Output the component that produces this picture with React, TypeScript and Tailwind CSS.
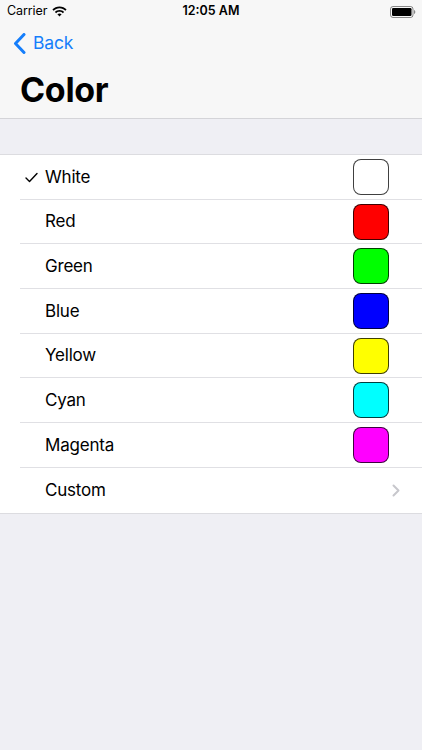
import React from "react";

const colors = [
  { name: "White", color: "#ffffff", checked: true },
  { name: "Red", color: "#ff0000" },
  { name: "Green", color: "#00ff00" },
  { name: "Blue", color: "#0000ff" },
  { name: "Yellow", color: "#ffff00" },
  { name: "Cyan", color: "#00ffff" },
  { name: "Magenta", color: "#ff00ff" },
];

function Wifi() {
  return (
    <svg width="15" height="11" viewBox="0 0 15 11" className="ml-[5px]">
      <path d="M7.5 0.5C4.7 0.5 2.2 1.6 0.4 3.4L1.7 4.7C3.2 3.2 5.2 2.3 7.5 2.3C9.8 2.3 11.8 3.2 13.3 4.7L14.6 3.4C12.8 1.6 10.3 0.5 7.5 0.5Z" fill="#000" />
      <path d="M7.5 4C5.7 4 4.1 4.7 2.9 5.9L4.2 7.2C5.1 6.3 6.2 5.8 7.5 5.8C8.8 5.8 9.9 6.3 10.8 7.2L12.1 5.9C10.9 4.7 9.3 4 7.5 4Z" fill="#000" />
      <path d="M7.5 7.4C6.7 7.4 6 7.7 5.4 8.3L7.5 10.4L9.6 8.3C9 7.7 8.3 7.4 7.5 7.4Z" fill="#000" />
    </svg>
  );
}

function Battery() {
  return (
    <svg width="26" height="12" viewBox="0 0 26 12">
      <rect x="0.5" y="0.5" width="22.5" height="11" rx="2.5" fill="none" stroke="#000" strokeOpacity="0.45" />
      <rect x="2" y="2" width="19.5" height="8" rx="1.2" fill="#000" />
      <path d="M24 4v4c0.8-0.2 1.3-1 1.3-2s-0.5-1.8-1.3-2z" fill="#000" fillOpacity="0.45" />
    </svg>
  );
}

export default function App() {
  return (
    <div
      className="w-full min-h-[750px] bg-[#efeff4] text-black"
      style={{ fontFamily: "Inter, 'Liberation Sans', sans-serif" }}
    >
      <div className="bg-[#f7f7f7] h-[119px] border-b border-[#d4d4d8] flex flex-col">
        <div className="h-[22px] relative flex items-center px-[7px] pt-[1px]">
          <div className="flex items-center text-[12.5px] tracking-[-0.1px]">
            <span>Carrier</span>
            <Wifi />
          </div>
          <div className="absolute left-0 right-0 top-0 h-[22px] flex items-center justify-center text-[12.5px] font-semibold pt-[1px]">
            12:05 AM
          </div>
          <div className="ml-auto mr-[-1px] flex items-center">
            <Battery />
          </div>
        </div>
        <div className="h-[42px] flex items-center pl-[13px] pt-[1px] text-[#157efb]">
          <svg width="13" height="21" viewBox="0 0 13 21">
            <path d="M11 1.5L2.5 10.5L11 19.5" fill="none" stroke="#157efb" strokeWidth="3" strokeLinecap="round" strokeLinejoin="round" />
          </svg>
          <span className="ml-[7px] text-[17.5px] tracking-[-0.2px]">Back</span>
        </div>
        <div className="pl-[20px] pt-[6px] text-[34px] font-bold leading-[40px] tracking-[-0.3px]">
          Color
        </div>
      </div>
      <div className="h-[35px]" />
      <div className="bg-white border-t border-b border-[#dcdce0]">
        {colors.map((c) => (
          <div key={c.name} className="h-[44.7px] flex items-stretch">
            <div className="w-[45px] flex items-center justify-end pr-[7px] shrink-0">
              {c.checked && (
                <svg width="13" height="11" viewBox="0 0 13 11">
                  <path d="M1 6L4.5 9.5L12 1.5" fill="none" stroke="#000" strokeWidth="1.4" strokeLinecap="round" strokeLinejoin="round" />
                </svg>
              )}
            </div>
            <div className="flex-1 flex items-center border-b border-[#e0e0e4] -ml-[25px] pl-[25px]">
              <span className="text-[17px] tracking-[-0.2px] pt-[1px]">{c.name}</span>
              <div
                className="ml-auto mr-[33px] w-[36px] h-[36px] rounded-[8px] border border-[rgba(0,0,0,0.75)]"
                style={{ backgroundColor: c.color }}
              />
            </div>
          </div>
        ))}
        <div className="h-[44.7px] flex items-center pl-[45px] pr-[22px]">
          <span className="text-[17px] tracking-[-0.2px] pt-[1px]">Custom</span>
          <svg width="8" height="13" viewBox="0 0 8 13" className="ml-auto">
            <path d="M1.5 1.5L6.5 6.5L1.5 11.5" fill="none" stroke="#c7c7cc" strokeWidth="2" strokeLinecap="round" strokeLinejoin="round" />
          </svg>
        </div>
      </div>
    </div>
  );
}
